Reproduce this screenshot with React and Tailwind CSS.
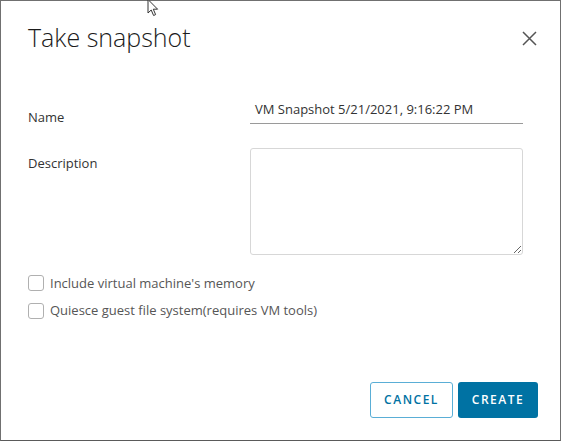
function Check({ label }) {
  return (
    <label className="flex items-center gap-[6px] text-[13px] text-[#565656]">
      <span className="w-[16px] h-[16px] rounded-[3px] border border-[#b0b0b0] bg-white" />
      <span>{label}</span>
    </label>
  );
}

export default function App() {
  return (
    <div
      className="relative w-[562px] h-[442px] bg-white"
      style={{ fontFamily: '"Open Sans", "Liberation Sans", sans-serif' }}
    >
      <div className="w-[561px] h-[441px] border border-[#707070] border-b-[#5a5a5a] flex flex-col">
        <div className="flex items-start justify-between pl-[27px] pr-[23px] pt-[20px]">
          <h1 className="text-[25px] font-light text-[#1b1b1b] leading-[32px]">Take snapshot</h1>
          <svg className="mt-[10px]" width="15" height="15" viewBox="0 0 15 15">
            <path d="M1 1 L14 14 M14 1 L1 14" stroke="#555" strokeWidth="1.5" fill="none" />
          </svg>
        </div>

        <div className="mt-[47px] pl-[27px] pr-[37px]">
          <div className="flex items-end">
            <div className="w-[222px] text-[13px] text-[#333] mb-[-4px]">Name</div>
            <div className="flex-1 border-b border-[#9a9a9a] pl-[5px] pb-[3px] text-[13px] text-[#333]">
              VM Snapshot 5/21/2021, 9:16:22 PM
            </div>
          </div>
          <div className="flex mt-[24px]">
            <div className="w-[222px] text-[13px] text-[#333] pt-[6px]">Description</div>
            <textarea className="flex-1 h-[107px] border border-[#d7d7d7] rounded-[3px] outline-none" />
          </div>
          <div className="mt-[19px] flex flex-col gap-[8px]">
            <Check label="Include virtual machine's memory" />
            <Check label="Quiesce guest file system(requires VM tools)" />
          </div>
        </div>

        <div className="mt-auto flex justify-end gap-[5px] pr-[22px] pb-[22px]">
          <button className="w-[83px] h-[36px] rounded-[3px] border border-[#5aaed6] text-[#0072a3] text-[12px] font-semibold tracking-[1.5px] bg-white">
            CANCEL
          </button>
          <button className="w-[80px] h-[36px] rounded-[3px] bg-[#0072a3] text-white text-[12px] font-semibold tracking-[1.5px]">
            CREATE
          </button>
        </div>
      </div>

      <svg className="absolute left-[147px] top-[-1px]" width="14" height="18" viewBox="0 0 14 18">
        <path d="M1 0.5 L1 14 L4.2 11 L6.6 16.5 L8.6 15.6 L6.3 10.2 L10.6 10.2 Z" fill="white" stroke="#333" strokeWidth="1" strokeLinejoin="miter" />
      </svg>
    </div>
  );
}
